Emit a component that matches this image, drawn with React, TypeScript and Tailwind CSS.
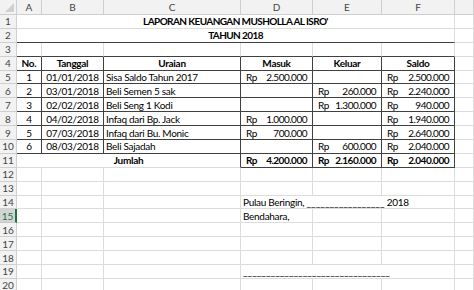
import React from 'react';

type Row = { no: string; tgl: string; ur: string; masuk: string; keluar: string; saldo: string };

const rows: Row[] = [
    { no: '1', tgl: '01/01/2018', ur: 'Sisa Saldo Tahun 2017', masuk: '2.500.000', keluar: '', saldo: '2.500.000' },
    { no: '2', tgl: '03/01/2018', ur: 'Beli Semen 5 sak', masuk: '', keluar: '260.000', saldo: '2.240.000' },
    { no: '3', tgl: '02/02/2018', ur: 'Beli Seng 1 Kodi', masuk: '', keluar: '1.300.000', saldo: '940.000' },
    { no: '4', tgl: '04/02/2018', ur: 'Infaq dari Bp. Jack', masuk: '1.000.000', keluar: '', saldo: '1.940.000' },
    { no: '5', tgl: '07/03/2018', ur: 'Infaq dari Bu. Monic', masuk: '700.000', keluar: '', saldo: '2.640.000' },
    { no: '6', tgl: '08/03/2018', ur: 'Beli Sajadah', masuk: '', keluar: '600.000', saldo: '2.040.000' },
];

// gridline / table border styles
const grid = 'border-r border-b border-[#dcdcdc]';
const dark = 'border-r border-b border-[#404040]';
const darkBottom = 'border-r border-b border-r-[#dcdcdc] border-b-[#404040]';

const RowHead: React.FC<{ n: number; selected?: boolean }> = ({ n, selected }) => (
    <div
        className={
            selected
                ? 'flex items-center justify-center bg-[#d4d4d4] text-[#217346] border-b border-[#c8c8c8] border-r-2 border-r-[#217346] text-[10px] tracking-normal'
                : 'flex items-center justify-center bg-[#f2f2f2] text-[#444] border-b border-r border-[#cfcfcf] text-[10px] tracking-normal'
        }
    >
        {n}
    </div>
);

const Money: React.FC<{ v: string; bold?: boolean }> = ({ v, bold }) => (
    <div className={`${dark} flex items-center justify-between pl-[5px] pr-[5px] tracking-[-0.5px] ${bold ? 'font-bold' : ''}`}>
        {v && <span>Rp</span>}
        {v && <span>{v}</span>}
    </div>
);

const Empty: React.FC = () => <div className={grid} />;

export default function App() {
    return (
        <div className="w-[474px] h-[290px] overflow-hidden bg-white text-black text-[10px] leading-none tracking-[-0.3px]" style={{ fontFamily: 'Lato, "Liberation Sans", sans-serif' }}>
            <div className="grid grid-cols-[17px_25px_62px_137px_72px_69px_73px_1fr] grid-rows-[15px_repeat(20,13.9px)]">
                {/* column header row */}
                <div className="relative bg-[#f2f2f2] border-r border-b border-[#cfcfcf]">
                    <svg className="absolute right-[2px] bottom-[2px]" width="9" height="9" viewBox="0 0 9 9">
                        <polygon points="9,0 9,9 0,9" fill="#cfcfcf" />
                    </svg>
                </div>
                {['A', 'B', 'C', 'D', 'E', 'F', ''].map((c, i) => (
                    <div key={i} className="flex items-center justify-center bg-[#f2f2f2] text-[#444] tracking-normal border-r border-b border-[#cfcfcf]">
                        {c}
                    </div>
                ))}

                {/* 1 */}
                <RowHead n={1} />
                <div className={`${grid} col-span-6 flex items-center justify-center font-bold tracking-[-0.6px]`}>LAPORAN KEUANGAN MUSHOLLA AL ISRO'</div>
                <Empty />

                {/* 2 */}
                <RowHead n={2} />
                <div className={`${darkBottom} col-span-6 flex items-center justify-center font-bold tracking-[-0.6px]`}>TAHUN 2018</div>
                <Empty />

                {/* 3 */}
                <RowHead n={3} />
                {[0, 1, 2, 3, 4, 5].map((i) => (
                    <div key={i} className={darkBottom} />
                ))}
                <Empty />

                {/* 4 */}
                <RowHead n={4} />
                {['No.', 'Tanggal', 'Uraian', 'Masuk', 'Keluar', 'Saldo'].map((h) => (
                    <div key={h} className={`${dark} flex items-center justify-center font-bold`}>
                        {h}
                    </div>
                ))}
                <Empty />

                {rows.map((r, i) => (
                    <React.Fragment key={r.no}>
                        <RowHead n={5 + i} />
                        <div className={`${dark} flex items-center justify-center`}>{r.no}</div>
                        <div className={`${dark} flex items-center justify-center`}>{r.tgl}</div>
                        <div className={`${dark} flex items-center px-[2px]`}>{r.ur}</div>
                        <Money v={r.masuk} />
                        <Money v={r.keluar} />
                        <Money v={r.saldo} />
                        <Empty />
                    </React.Fragment>
                ))}

                {/* 11 */}
                <RowHead n={11} />
                <div className="col-span-3 border-r border-b border-r-[#404040] border-b-[#dcdcdc] flex items-center justify-center font-bold">Jumlah</div>
                <Money v="4.200.000" bold />
                <Money v="2.160.000" bold />
                <Money v="2.040.000" bold />
                <Empty />

                {[12, 13].map((n) => (
                    <React.Fragment key={n}>
                        <RowHead n={n} />
                        {[0, 1, 2, 3, 4, 5, 6].map((i) => (
                            <Empty key={i} />
                        ))}
                    </React.Fragment>
                ))}

                {/* 14 */}
                <RowHead n={14} />
                <Empty />
                <Empty />
                <Empty />
                <div className={`${grid} col-span-3 flex items-center px-[2px] whitespace-nowrap`}>
                    Pulau Beringin,&nbsp;<span className="tracking-normal">_________________</span>&nbsp;2018
                </div>
                <Empty />

                {/* 15 */}
                <RowHead n={15} selected />
                <Empty />
                <Empty />
                <Empty />
                <div className={`${grid} flex items-center px-[2px] whitespace-nowrap`}>Bendahara,</div>
                <Empty />
                <Empty />
                <Empty />

                {[16, 17, 18].map((n) => (
                    <React.Fragment key={n}>
                        <RowHead n={n} />
                        {[0, 1, 2, 3, 4, 5, 6].map((i) => (
                            <Empty key={i} />
                        ))}
                    </React.Fragment>
                ))}

                {/* 19 */}
                <RowHead n={19} />
                <Empty />
                <Empty />
                <Empty />
                <div className={`${grid} col-span-3 flex items-center px-[2px] whitespace-nowrap overflow-hidden tracking-normal`}>________________________________</div>
                <Empty />

                <RowHead n={20} />
                {[0, 1, 2, 3, 4, 5, 6].map((i) => (
                    <Empty key={i} />
                ))}
            </div>
        </div>
    );
}
